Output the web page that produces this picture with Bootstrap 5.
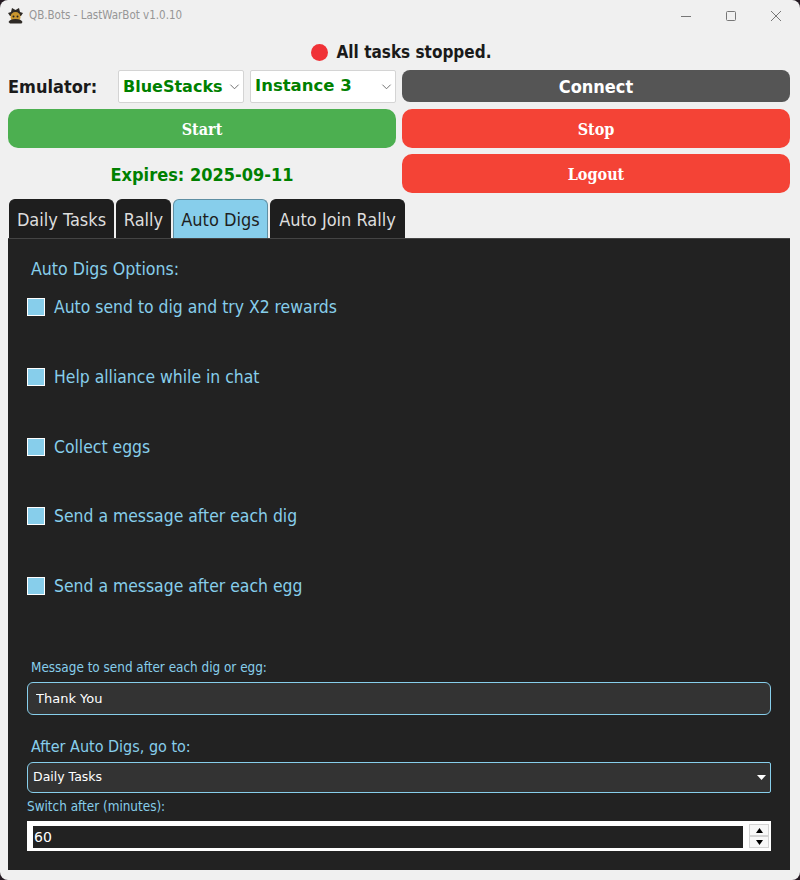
<!DOCTYPE html>
<html lang="en">
<head>
    <meta charset="UTF-8">
    <meta name="viewport" content="width=device-width, initial-scale=1.0">
    <title>QB.Bots - LastWarBot v1.0.10</title>
    <link href="https://cdn.jsdelivr.net/npm/bootstrap@5.3.0/dist/css/bootstrap.min.css" rel="stylesheet">
    <style>
        html, body { height: 880px; overflow: hidden; background: #241a22; }
        body { font-family: "DejaVu Sans", "Liberation Sans", sans-serif; font-stretch: condensed; }
        .app-window { height: 880px; background: #f0f0f0; border-radius: 8px; padding-bottom: 10px; }

        /* title bar */
        .title-bar { height: 30px; padding: 1px 18px 0 7px; color: #969696; font-size: 11.5px; }
        .title-logo { width: 17px; height: 17px; margin-right: 5px; }
        .win-group { gap: 33px; }
        .win-btn { width: 12px; height: 12px; display: block; }

        .status-line { height: 40px; padding-left: 2px; padding-top: 5px; font-size: 17px; font-weight: 700; color: #1a1a1a; }
        .status-dot { width: 17px; height: 17px; border-radius: 50%; background: #f03237; margin-right: 1px; }

        .top-grid { display: grid; grid-template-columns: 388px 388px; column-gap: 6px; padding: 0 10px 0 8px; }
        .emu-row { height: 32px; margin-bottom: 7px; }
        .emu-label { width: 110px; font-size: 18px; font-weight: 700; color: #1a1a1a; }
        .emu-select { height: 33px; padding: 1px 0 0 4px; border: 1px solid #d4d4d4; border-radius: 2px; background-color: #fff; color: #008000; font-size: 16.5px; font-weight: 700; box-shadow: none; background-position: right 3px center; background-size: 11px 11px; background-image: url("data:image/svg+xml,%3csvg xmlns='http://www.w3.org/2000/svg' viewBox='0 0 12 12'%3e%3cpath fill='none' stroke='%23666' d='M1.5 4l4.5 4.500L10.5 4'/%3e%3c/svg%3e"); }
        .emu-select.first-select { width: 126px; margin-right: 6px; font-size: 16px; }
        .emu-select.second-select { width: 146px; }

        .act-btn { border: 0; border-radius: 10px; color: #fff; font-family: "DejaVu Serif", serif; font-stretch: condensed; font-weight: 700; font-size: 16px; height: 39px; padding: 2px 0 0; width: 100%; }
        .act-connect { background: #555; font-family: "DejaVu Sans", sans-serif; font-size: 18px; height: 32px; border-radius: 8px; margin-bottom: 7px; padding: 0; }
        .act-start { background: #4caf50; margin-bottom: 6px; }
        .act-stop { background: #f44336; margin-bottom: 6px; }
        .act-btn:hover, .act-btn:active { color: #fff; }
        .act-start:hover { background: #4caf50; }
        .act-stop:hover { background: #f44336; }
        .act-connect:hover { background: #555; }
        .expires { height: 39px; padding-top: 2px; color: #008000; font-size: 18px; font-weight: 700; }

        /* tabs */
        .bot-tabs { border: 0; margin: 6px 0 0 9px; gap: 2px; height: 39px; }
        .bot-tabs .nav-link { height: 39px; padding: 0; text-align: center; background: #1e1e1e; color: #ddd; border: 1px solid #1e1e1e; border-bottom: 0; border-radius: 6px 6px 0 0; font-size: 18px; line-height: 39px; margin: 0; }
        .bot-tabs .nav-link.active { background: #87ceeb; color: #1e1e1e; border: 1px solid #5f8fa3; border-bottom: 0; }
        .tab-daily { width: 105px; }
        .tab-rally { width: 55px; }
        .tab-digs { width: 95px; }
        .tab-join { width: 135px; }

        /* pane */
        .bot-pane { height: 632px; margin: 0 10px 0 8px; background: #222; border-top: 1px solid #444; padding: 0 19px; color: #87ceeb; }
        .pane-title { font-size: 17.6px; padding: 19px 0 0 4px; height: 56px; line-height: 22px; margin: 0; }
        .dig-check { height: 69.8px; margin: 0; padding: 0; }
        .dig-check .form-check-input { width: 18px; height: 18px; margin: 3px 9px 0 0; flex: none; border: 1px solid #fff; border-radius: 0; background-color: #87ceeb; box-shadow: none; float: none; }
        .dig-check .form-check-label { font-size: 17.4px; line-height: 24px; }
        .check-list { height: 364px; }
        .small-label { font-size: 13.4px; line-height: 18px; margin: 0; display: block; }
        .msg-input { height: 33px; margin-top: 5px; padding: 0 8px; border: 1px solid #87ceeb; border-radius: 6px; background: #333; color: #fff; font-size: 13px; box-shadow: none; }
        .msg-input:focus { background: #333; color: #fff; border-color: #87ceeb; box-shadow: none; }
        .go-label { font-size: 16px; line-height: 21px; padding-left: 4px; margin: 21px 0 5px; display: block; }
        .go-select { height: 31px; padding: 0 0 0 5px; border: 1px solid #87ceeb; border-radius: 6px 2px 2px 6px; background-color: #333; color: #fff; font-size: 12.5px; box-shadow: none; background-position: right 4px center; background-size: 9px 6px; background-image: url("data:image/svg+xml,%3csvg xmlns='http://www.w3.org/2000/svg' viewBox='0 0 9 6'%3e%3cpath fill='%23fff' d='M0 0h9L4.500 5z'/%3e%3c/svg%3e"); }
        .switch-label { margin: 5px 0 5px; }
        .spin-box { height: 30px; background: #fff; padding: 3px 2px 3px 6px; }
        .spin-input { flex: 1; height: 22px; margin: 2px 6px 0 0; padding: 0 1px; border: 0; border-radius: 0; background: #222; color: #fff; font-size: 14px; box-shadow: none; }
        .spin-input:focus { background: #222; color: #fff; box-shadow: none; }
        .spin-btns { width: 20px; }
        .spin-step { flex: 1; border: 1px solid #d4d4d4; background: #f8f8f8; padding: 0; line-height: 0; }
        .spin-step svg { width: 7px; height: 5px; }
    </style>
</head>
<body>
    <div class="app-window">
        <!-- Barra de titulo -->
        <div class="title-bar d-flex align-items-center">
            <svg class="title-logo" viewBox="0 0 17 17">
                <path fill="#2e2a26" d="M1 6l3-1 1-4 3.500 2L12 1l1 4 3 1-2 3H3z"/>
                <circle cx="8.500" cy="10" r="5" fill="#c9962e"/>
                <path fill="#2e2a26" d="M1.500 15c1-2 3-3 7-3s6 1 7 3l-1 1.500H3z"/>
                <circle cx="6.500" cy="9.500" r="1" fill="#222"/>
                <circle cx="10.500" cy="9.500" r="1" fill="#222"/>
            </svg>
            <span>QB.Bots - LastWarBot v1.0.10</span>
            <div class="ms-auto d-flex align-items-center win-group">
                <svg class="win-btn" viewBox="0 0 12 12"><path stroke="#777" d="M1 6.500h10"/></svg>
                <svg class="win-btn" viewBox="0 0 12 12"><rect x="1.500" y="1.500" width="9" height="9" rx="1" fill="none" stroke="#777"/></svg>
                <svg class="win-btn" viewBox="0 0 12 12"><path stroke="#777" d="M1 1l10 10M11 1L1 11"/></svg>
            </div>
        </div>

        <div class="status-line d-flex align-items-center justify-content-center gap-2">
            <span class="status-dot"></span>
            <span>All tasks stopped.</span>
        </div>

        <div class="top-grid">
            <div class="emu-row d-flex align-items-center">
                <span class="emu-label">Emulator:</span>
                <select class="form-select emu-select first-select"><option>BlueStacks</option></select>
                <select class="form-select emu-select second-select"><option>Instance 3</option></select>
            </div>
            <button class="btn act-btn act-connect">Connect</button>
            <button class="btn act-btn act-start">Start</button>
            <button class="btn act-btn act-stop">Stop</button>
            <div class="expires d-flex align-items-center justify-content-center">Expires: 2025-09-11</div>
            <button class="btn act-btn act-stop mb-0">Logout</button>
        </div>

        <ul class="nav nav-tabs bot-tabs">
            <li class="nav-item"><a class="nav-link tab-daily" href="#">Daily Tasks</a></li>
            <li class="nav-item"><a class="nav-link tab-rally" href="#">Rally</a></li>
            <li class="nav-item"><a class="nav-link tab-digs active" href="#">Auto Digs</a></li>
            <li class="nav-item"><a class="nav-link tab-join" href="#">Auto Join Rally</a></li>
        </ul>

        <div class="bot-pane">
            <p class="pane-title">Auto Digs Options:</p>
            <div class="check-list">
                <div class="form-check dig-check d-flex align-items-start">
                    <input class="form-check-input" type="checkbox" id="c1">
                    <label class="form-check-label" for="c1">Auto send to dig and try X2 rewards</label>
                </div>
                <div class="form-check dig-check d-flex align-items-start">
                    <input class="form-check-input" type="checkbox" id="c2">
                    <label class="form-check-label" for="c2">Help alliance while in chat</label>
                </div>
                <div class="form-check dig-check d-flex align-items-start">
                    <input class="form-check-input" type="checkbox" id="c3">
                    <label class="form-check-label" for="c3">Collect eggs</label>
                </div>
                <div class="form-check dig-check d-flex align-items-start">
                    <input class="form-check-input" type="checkbox" id="c4">
                    <label class="form-check-label" for="c4">Send a message after each dig</label>
                </div>
                <div class="form-check dig-check d-flex align-items-start">
                    <input class="form-check-input" type="checkbox" id="c5">
                    <label class="form-check-label" for="c5">Send a message after each egg</label>
                </div>
            </div>

            <label class="small-label ps-1" for="msg">Message to send after each dig or egg:</label>
            <input class="form-control msg-input" id="msg" type="text" value="Thank You">

            <label class="go-label" for="goto">After Auto Digs, go to:</label>
            <select class="form-select go-select" id="goto"><option>Daily Tasks</option></select>

            <label class="small-label switch-label" for="mins">Switch after (minutes):</label>
            <div class="spin-box d-flex">
                <input class="form-control spin-input" id="mins" type="text" value="60">
                <div class="spin-btns d-flex flex-column">
                    <button class="spin-step" type="button"><svg viewBox="0 0 7 5"><path d="M3.500 0L7 5H0z"/></svg></button>
                    <button class="spin-step" type="button"><svg viewBox="0 0 7 5"><path d="M0 0h7L3.500 5z"/></svg></button>
                </div>
            </div>
        </div>
    </div>

    <script src="https://cdn.jsdelivr.net/npm/bootstrap@5.3.0/dist/js/bootstrap.bundle.min.js"></script>
</body>
</html>
